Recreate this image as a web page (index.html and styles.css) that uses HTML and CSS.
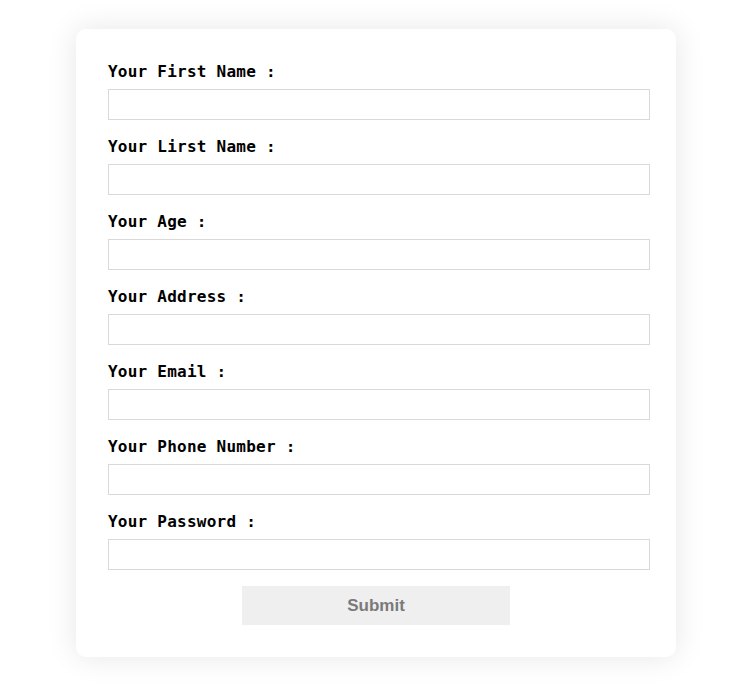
FILE: index.html
```html
<!DOCTYPE html>
<html>
<head>
<meta charset="utf-8">
<link rel="stylesheet" href="styles.css">
</head>
<body>
<form class="card">
  <div class="field"><label class="label">Your First Name :</label><input class="input" type="text"></div>
  <div class="field"><label class="label">Your Lirst Name :</label><input class="input" type="text"></div>
  <div class="field"><label class="label">Your Age :</label><input class="input" type="text"></div>
  <div class="field"><label class="label">Your Address :</label><input class="input" type="text"></div>
  <div class="field"><label class="label">Your Email :</label><input class="input" type="text"></div>
  <div class="field"><label class="label">Your Phone Number :</label><input class="input" type="text"></div>
  <div class="field"><label class="label">Your Password :</label><input class="input" type="password"></div>
  <div class="actions"><button class="submit" type="button">Submit</button></div>
</form>
</body>
</html>
```
FILE: styles.css
```css
html, body {
  margin: 0;
  padding: 0;
  background: #ffffff;
}
body {
  padding-top: 29px;
  padding-bottom: 33px;
}
.card {
  box-sizing: border-box;
  width: 600px;
  height: 628px;
  margin-left: 76px;
  padding: 33px 26px 32px 32px;
  background: #ffffff;
  border-radius: 10px;
  box-shadow: 0 0 30px rgba(0, 0, 0, 0.1);
  display: flex;
  flex-direction: column;
}
.field {
  display: flex;
  flex-direction: column;
  margin-bottom: 17px;
}
.field:nth-child(7) {
  margin-bottom: 16px;
}
.label {
  font-family: "DejaVu Sans Mono", monospace;
  font-weight: bold;
  font-size: 16px;
  line-height: 19px;
  letter-spacing: 0.24px;
  color: #000000;
  margin-bottom: 8px;
}
.input {
  box-sizing: border-box;
  width: 542px;
  height: 31px;
  margin: 0;
  padding: 0 6px;
  border: 1px solid #d9d9d9;
  background: #ffffff;
  outline: none;
}
.actions {
  display: flex;
  justify-content: center;
  padding-right: 6px;
}
.submit {
  width: 268px;
  height: 39px;
  border: none;
  background: #efefef;
  color: #7a7a7a;
  font-family: "Liberation Sans", Arial, sans-serif;
  font-weight: bold;
  font-size: 17px;
  padding: 0;
  margin: 0;
}
```
